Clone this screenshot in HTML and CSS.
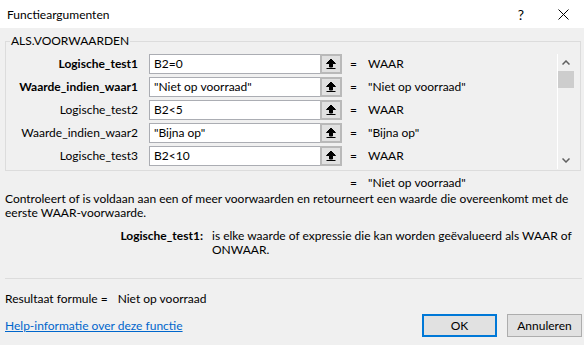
FILE: index.html
```html
<!DOCTYPE html>
<html lang="nl">

<head>
  <meta charset="UTF-8">
  <title>Functieargumenten</title>
  <link rel="stylesheet" href="styles.css">
</head>

<body>
  <div class="venster">
    <!-- Titelbalk -->
    <div class="titelbalk">
      <span class="titel">Functieargumenten</span>
      <span class="help">?</span>
      <span class="sluiten">
        <svg width="11" height="11" viewBox="0 0 11 11"><path d="M0.5 0.5 L10.5 10.5 M10.5 0.5 L0.5 10.5" stroke="#000" stroke-width="1" fill="none"/></svg>
      </span>
    </div>

    <div class="inhoud">
      <fieldset class="argumenten">
        <legend>ALS.VOORWAARDEN</legend>
        <div class="rijen">
          <div class="rij">
            <label class="vet">Logische_test1</label>
            <div class="veld">B2=0</div>
            <span class="kiezer"><svg width="10" height="12" viewBox="0 0 10 12"><path d="M5 1 L0.5 5.5 L3.5 5.5 L3.5 9 L6.5 9 L6.5 5.5 L9.5 5.5 Z M0.5 10.5 H9.5" stroke="#000" stroke-width="1" fill="#000"/></svg></span>
            <span class="is">=</span>
            <span class="waarde">WAAR</span>
          </div>
          <div class="rij">
            <label class="vet">Waarde_indien_waar1</label>
            <div class="veld">"Niet op voorraad"</div>
            <span class="kiezer"><svg width="10" height="12" viewBox="0 0 10 12"><path d="M5 1 L0.5 5.5 L3.5 5.5 L3.5 9 L6.5 9 L6.5 5.5 L9.5 5.5 Z M0.5 10.5 H9.5" stroke="#000" stroke-width="1" fill="#000"/></svg></span>
            <span class="is">=</span>
            <span class="waarde">"Niet op voorraad"</span>
          </div>
          <div class="rij">
            <label>Logische_test2</label>
            <div class="veld">B2&lt;5</div>
            <span class="kiezer"><svg width="10" height="12" viewBox="0 0 10 12"><path d="M5 1 L0.5 5.5 L3.5 5.5 L3.5 9 L6.5 9 L6.5 5.5 L9.5 5.5 Z M0.5 10.5 H9.5" stroke="#000" stroke-width="1" fill="#000"/></svg></span>
            <span class="is">=</span>
            <span class="waarde">WAAR</span>
          </div>
          <div class="rij">
            <label>Waarde_indien_waar2</label>
            <div class="veld">"Bijna op"</div>
            <span class="kiezer"><svg width="10" height="12" viewBox="0 0 10 12"><path d="M5 1 L0.5 5.5 L3.5 5.5 L3.5 9 L6.5 9 L6.5 5.5 L9.5 5.5 Z M0.5 10.5 H9.5" stroke="#000" stroke-width="1" fill="#000"/></svg></span>
            <span class="is">=</span>
            <span class="waarde">"Bijna op"</span>
          </div>
          <div class="rij">
            <label>Logische_test3</label>
            <div class="veld">B2&lt;10</div>
            <span class="kiezer"><svg width="10" height="12" viewBox="0 0 10 12"><path d="M5 1 L0.5 5.5 L3.5 5.5 L3.5 9 L6.5 9 L6.5 5.5 L9.5 5.5 Z M0.5 10.5 H9.5" stroke="#000" stroke-width="1" fill="#000"/></svg></span>
            <span class="is">=</span>
            <span class="waarde">WAAR</span>
          </div>
        </div>

        <!-- Schuifbalk -->
        <div class="schuifbalk">
          <div class="pijl"><svg width="8" height="5" viewBox="0 0 8 5"><path d="M0.5 4.5 L4 1 L7.5 4.5" stroke="#606060" stroke-width="1.5" fill="none"/></svg></div>
          <div class="duim"></div>
          <div class="ruimte"></div>
          <div class="pijl"><svg width="8" height="5" viewBox="0 0 8 5"><path d="M0.5 0.5 L4 4 L7.5 0.5" stroke="#606060" stroke-width="1.5" fill="none"/></svg></div>
        </div>
      </fieldset>

      <div class="uitkomst">
        <span class="is">=</span>
        <span class="waarde">"Niet op voorraad"</span>
      </div>

      <p class="omschrijving">Controleert of is voldaan aan een of meer voorwaarden en retourneert een waarde die overeenkomt met de eerste WAAR-voorwaarde.</p>

      <div class="uitleg">
        <span class="vet">Logische_test1:</span>
        <span>is elke waarde of expressie die kan worden geëvalueerd als WAAR of ONWAAR.</span>
      </div>

      <hr class="scheiding">

      <div class="resultaat">Resultaat formule =<span class="resultaat-waarde">Niet op voorraad</span></div>

      <div class="onderbalk">
        <a href="#" class="helplink">Help-informatie over deze functie</a>
        <button class="knop standaard">OK</button>
        <button class="knop">Annuleren</button>
      </div>
    </div>
  </div>
</body>

</html>
```

FILE: styles.css
```css
/* Basis van het dialoogvenster */
body {
  margin: 0;
  font-family: Lato, "Noto Sans", sans-serif;
  font-size: 12px;
  color: #000;
  background-color: #f0f0f0;
}

.venster {
  width: 584px;
  height: 345px;
  overflow: hidden;
}

/* Titelbalk */
.titelbalk {
  height: 28px;
  background: #fff;
  display: flex;
  align-items: center;
}

.titel {
  padding-left: 7px;
  flex: 1;
}

.help {
  font-size: 14px;
  width: 20px;
  text-align: center;
  margin-right: 25px;
}

.sluiten {
  width: 14px;
  display: flex;
  justify-content: center;
  margin-right: 14px;
}

.inhoud {
  padding: 0 2px 0 5px;
}

/* Kader met argumenten */
.argumenten {
  margin: 6px 1px 0 0;
  padding: 6px 6px 1px 0;
  border: 1px solid #dcdcdc;
  display: flex;
  line-height: 14px;
}

.argumenten legend {
  margin-left: 4px;
  padding: 0 1px;
  line-height: 14px;
}

.rijen {
  flex: 1;
}

.rij {
  height: 23px;
  display: flex;
  align-items: flex-start;
}

.rij label {
  width: 132px;
  text-align: right;
  margin-right: 11px;
  line-height: 20px;
}

.vet {
  font-weight: bold;
}

.veld {
  box-sizing: border-box;
  width: 171px;
  height: 20px;
  background: #fff;
  border: 1px solid #abadb3;
  border-right: none;
  padding-left: 4px;
  line-height: 18px;
}

.kiezer {
  box-sizing: border-box;
  width: 22px;
  height: 20px;
  background: #e1e1e1;
  border: 2px solid #b9b9b9;
  display: flex;
  align-items: center;
  justify-content: center;
}

.is {
  margin-left: 8px;
  width: 18px;
  line-height: 20px;
}

.waarde {
  line-height: 20px;
}

/* Schuifbalk */
.schuifbalk {
  width: 16px;
  border-left: 1px solid #fff;
  display: flex;
  flex-direction: column;
}

.pijl {
  height: 17px;
  display: flex;
  align-items: center;
  justify-content: center;
}

.duim {
  height: 17px;
  background: #cdcdcd;
}

.ruimte {
  flex: 1;
}

/* Uitkomst en omschrijving */
.uitkomst {
  display: flex;
  padding-left: 337px;
  margin-top: 4px;
  height: 16px;
}

.uitkomst .is,
.uitkomst .waarde {
  line-height: 16px;
}

.omschrijving {
  margin: 1px 0 0;
  line-height: 14px;
  width: 566px;
}

.uitleg {
  display: flex;
  margin-top: 9px;
  line-height: 14px;
}

.uitleg .vet {
  width: 198px;
  text-align: right;
  margin-right: 9px;
  flex-shrink: 0;
}

.uitleg span:last-child {
  width: 366px;
}

.scheiding {
  margin: 21px 0 0;
  border: none;
  border-top: 1px solid #dcdcdc;
}

.resultaat {
  margin-top: 12px;
  line-height: 16px;
}

.resultaat-waarde {
  margin-left: 10px;
}

/* Onderste balk met knoppen */
.onderbalk {
  display: flex;
  align-items: center;
  margin-top: 7px;
}

.helplink {
  color: #0066cc;
  flex: 1;
}

.knop {
  font-family: inherit;
  font-size: 12px;
  width: 75px;
  height: 23px;
  margin: 0 0 0 10px;
  padding: 0;
  background: #e1e1e1;
  border: 1px solid #adadad;
  color: #000;
}

.knop.standaard {
  border: 2px solid #0078d7;
}
```
